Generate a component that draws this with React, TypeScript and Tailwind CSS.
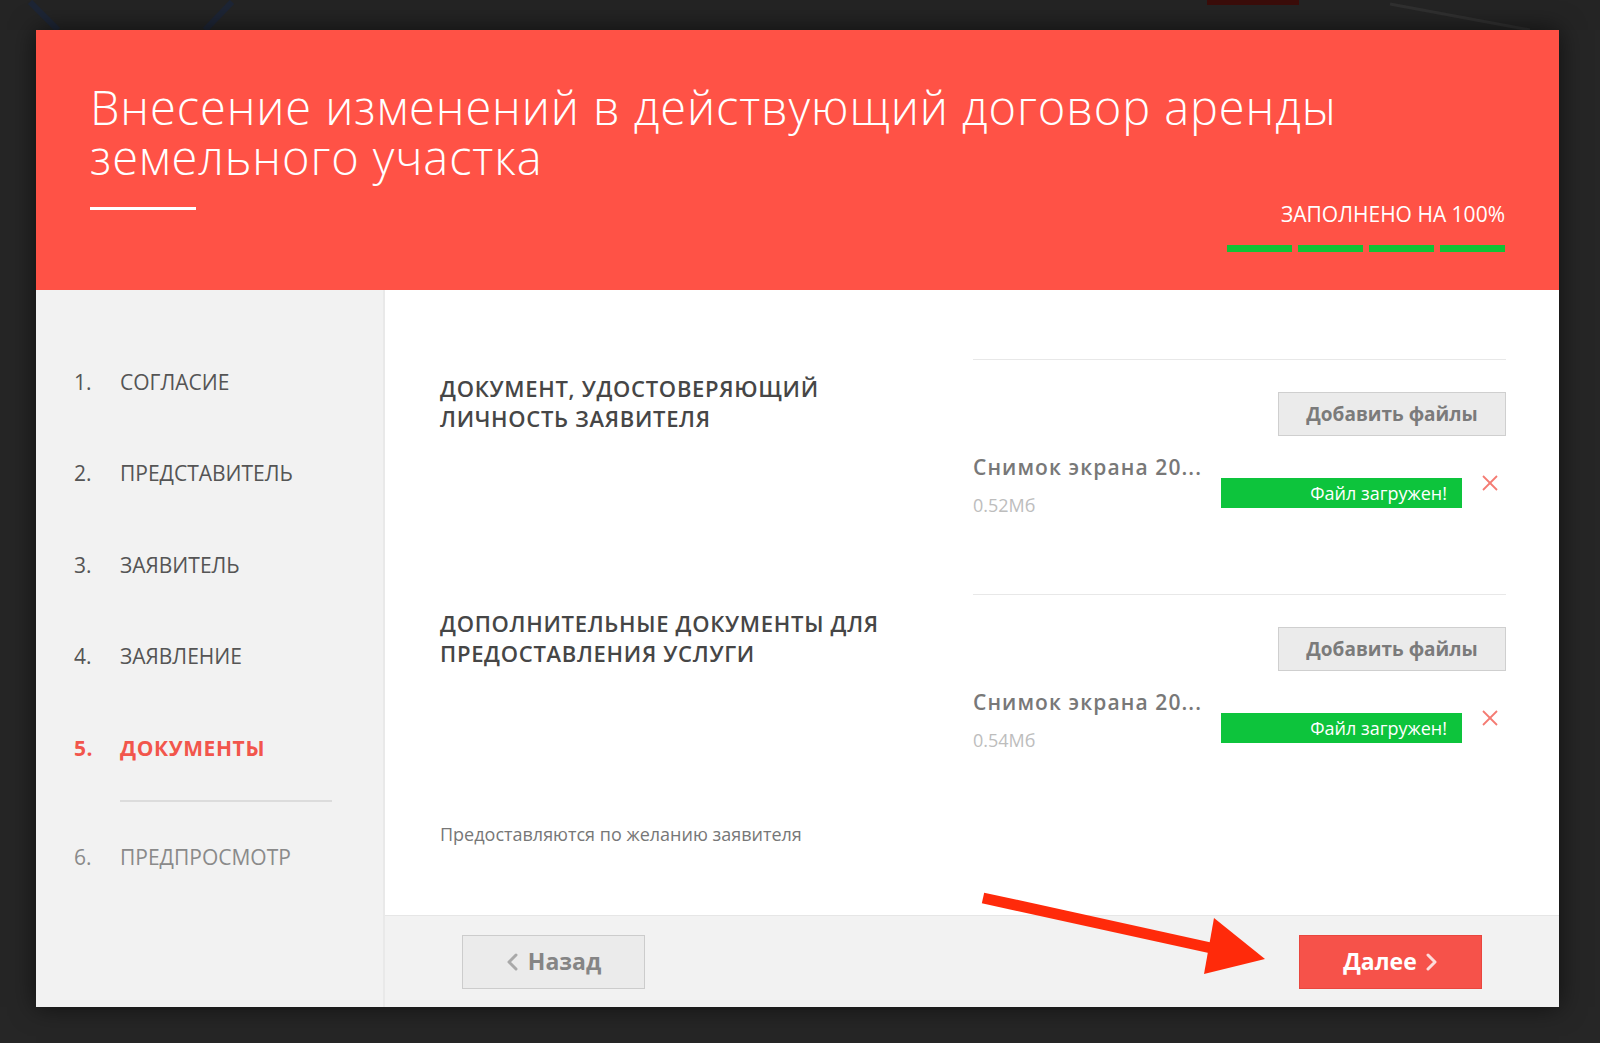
import React from "react";

const steps = [
  { n: "1.", label: "СОГЛАСИЕ", state: "done" },
  { n: "2.", label: "ПРЕДСТАВИТЕЛЬ", state: "done" },
  { n: "3.", label: "ЗАЯВИТЕЛЬ", state: "done" },
  { n: "4.", label: "ЗАЯВЛЕНИЕ", state: "done" },
  { n: "5.", label: "ДОКУМЕНТЫ", state: "active" },
];

const sections = [
  {
    lines: ["ДОКУМЕНТ, УДОСТОВЕРЯЮЩИЙ", "ЛИЧНОСТЬ ЗАЯВИТЕЛЯ"],
    file: "Снимок экрана 20...",
    size: "0.52Мб",
  },
  {
    lines: ["ДОПОЛНИТЕЛЬНЫЕ ДОКУМЕНТЫ ДЛЯ", "ПРЕДОСТАВЛЕНИЯ УСЛУГИ"],
    file: "Снимок экрана 20...",
    size: "0.54Мб",
  },
];

const Chevron = ({ dir, color }: { dir: "left" | "right"; color: string }) => (
  <svg width="12" height="18" viewBox="0 0 12 18" fill="none">
    <polyline
      points={dir === "left" ? "10,2 3,9 10,16" : "2,2 9,9 2,16"}
      stroke={color}
      strokeWidth="3"
      strokeLinecap="round"
      strokeLinejoin="round"
    />
  </svg>
);

const RemoveIcon = () => (
  <svg width="16" height="16" viewBox="0 0 16 16" className="ml-[20px] mt-[22px] shrink-0">
    <line x1="1" y1="1" x2="15" y2="15" stroke="#f47b72" strokeWidth="1.8" />
    <line x1="15" y1="1" x2="1" y2="15" stroke="#f47b72" strokeWidth="1.8" />
  </svg>
);

const DocSection = ({
  lines,
  file,
  size,
  fixed,
}: {
  lines: string[];
  file: string;
  size: string;
  fixed?: boolean;
}) => (
  <div className={`flex ${fixed ? "h-[235px]" : ""}`}>
    <div className="flex-1 pt-[14px] pr-[30px]">
      <h3 className="text-[22px] leading-[30px] font-semibold tracking-[0.7px] text-[#464646]">
        {lines[0]}
        <br />
        {lines[1]}
      </h3>
    </div>
    <div className="w-[533px] border-t border-[#e8e8e8] pt-[32px]">
      <div className="flex justify-end">
        <button className="w-[228px] h-[44px] bg-[#ebebeb] border border-[#cfcfcf] text-[19px] font-bold text-[#7b7b7b]">
          Добавить файлы
        </button>
      </div>
      <div className="flex items-start mt-[17px] pr-[8px]">
        <div className="flex-1 min-w-0">
          <div className="text-[21px] leading-[28px] font-semibold tracking-[1.1px] text-[#787878] whitespace-nowrap">
            {file}
          </div>
          <div className="mt-[12px] text-[18px] leading-[24px] text-[#bdbdbd]">{size}</div>
        </div>
        <div className="mt-[25px] w-[241px] h-[30px] bg-[#0dc43c] text-white text-[18px] leading-[30px] text-right pr-[15px] shrink-0">
          Файл загружен!
        </div>
        <RemoveIcon />
      </div>
    </div>
  </div>
);

export default function App() {
  return (
    <div className="relative w-full h-[1043px] bg-[#262626] overflow-hidden font-['Open_Sans',sans-serif] pt-[30px] pl-[36px]">
      {/* blurred page behind the modal */}
      <svg className="absolute left-0 top-0" width="1600" height="30">
        <rect x="0" y="0" width="1600" height="30" fill="#242424" />
        <line x1="30" y1="2" x2="58" y2="30" stroke="#1d2535" strokeWidth="6" />
        <line x1="232" y1="2" x2="205" y2="30" stroke="#1d2535" strokeWidth="6" />
        <line x1="1390" y1="4" x2="1530" y2="30" stroke="#303030" strokeWidth="3" />
        <rect x="1207" y="0" width="92" height="5" fill="#3b0d0a" />
      </svg>

      <div className="relative w-[1523px] h-[977px] flex flex-col shadow-[0_0_24px_rgba(0,0,0,0.6)]">
        {/* header */}
        <div className="h-[260px] bg-[#ff5246] px-[54px] pt-[52px] flex flex-col">
          <h1 className="text-[47px] leading-[50px] font-light tracking-[0.9px] text-white">
            Внесение изменений в действующий договор аренды
            <br />
            земельного участка
          </h1>
          <div className="flex justify-between items-start">
            <div className="mt-[25px] w-[106px] h-[3px] bg-white" />
            <div className="mt-[18px] flex flex-col items-end">
              <div className="text-[21px] leading-[28px] text-white">ЗАПОЛНЕНО НА 100%</div>
              <div className="mt-[17px] flex gap-[6px]">
                <div className="w-[65px] h-[7px] bg-[#12c235]" />
                <div className="w-[65px] h-[7px] bg-[#12c235]" />
                <div className="w-[65px] h-[7px] bg-[#12c235]" />
                <div className="w-[65px] h-[7px] bg-[#12c235]" />
              </div>
            </div>
          </div>
        </div>

        {/* body */}
        <div className="flex-1 flex">
          <div className="w-[349px] bg-[#f2f2f2] pt-[46px] pl-[38px] border-r-2 border-[#e9e9e9]">
            {steps.map((s) => (
              <div
                key={s.n}
                className={`h-[91.5px] flex items-center text-[21px] leading-[28px] ${
                  s.state === "active"
                    ? "text-[#f2564c] font-bold tracking-[0.6px]"
                    : "text-[#555555]"
                }`}
              >
                <span className="w-[46px]">{s.n}</span>
                <span>{s.label}</span>
              </div>
            ))}
            <div className="ml-[46px] mt-[6px] w-[212px] h-[2px] bg-[#dcdcdc]" />
            <div className="h-[110px] flex items-center text-[21px] leading-[28px] text-[#8a8a8a]">
              <span className="w-[46px]">6.</span>
              <span>ПРЕДПРОСМОТР</span>
            </div>
          </div>

          <div className="flex-1 flex flex-col">
            <div className="flex-1 bg-white pt-[69px] pl-[55px] pr-[53px]">
              <DocSection {...sections[0]} fixed />
              <DocSection {...sections[1]} />
              <p className="mt-[70px] text-[18px] leading-[24px] text-[#777777]">
                Предоставляются по желанию заявителя
              </p>
            </div>
            <div className="h-[92px] bg-[#f2f2f2] border-t border-[#e6e6e6] px-[77px] flex items-center justify-between">
              <button className="w-[183px] h-[54px] bg-[#ebebeb] border border-[#cccccc] flex items-center justify-center gap-[10px] text-[23px] font-bold text-[#858585]">
                <Chevron dir="left" color="#a9a9a9" />
                Назад
              </button>
              <button className="w-[183px] h-[54px] bg-[#f6524a] border border-[#e9463e] flex items-center justify-center gap-[9px] text-[23px] font-bold text-white">
                Далее
                <Chevron dir="right" color="rgba(255,255,255,0.8)" />
              </button>
            </div>
          </div>
        </div>
      </div>

      {/* annotation arrow */}
      <svg className="absolute left-[975px] top-[885px] pointer-events-none" width="300" height="100" viewBox="0 0 300 100">
        <line x1="8" y1="13" x2="236" y2="63" stroke="#ff2a0a" strokeWidth="11" />
        <polygon points="239,33 229,89 290,74" fill="#ff2a0a" />
      </svg>
    </div>
  );
}
